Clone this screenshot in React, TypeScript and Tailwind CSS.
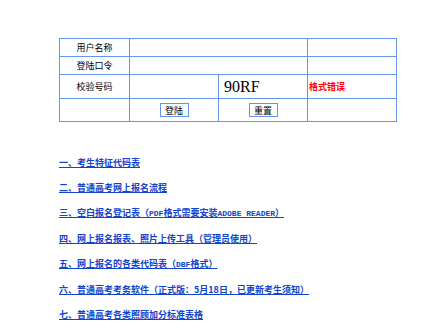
import React from 'react'

const cjk = { fontFamily: '"Noto Sans CJK SC", "Noto Sans", sans-serif' }

const Latin = ({ children }: { children: React.ReactNode }) => (
  <span className="font-['Liberation_Mono',monospace] text-[8px]">{children}</span>
)

const links: React.ReactNode[] = [
  '一、考生特征代码表',
  '二、普通高考网上报名流程',
  <>
    三、空白报名登记表（<Latin>PDF</Latin>格式需要安装<Latin>ADOBE READER</Latin>）
  </>,
  '四、网上报名报表、照片上传工具（管理员使用）',
  <>
    五、网上报名的各类代码表（<Latin>DBF</Latin>格式）
  </>,
  '六、普通高考考务软件（正式版：5月18日，已更新考生须知）',
  '七、普通高考各类照顾加分标准表格',
]

const cell = 'border border-[#6495ed] p-0'
const btn = 'w-[29px] h-[14px] border border-[#6495ed] bg-white text-[9px] leading-none align-middle'

const App = () => {
  return (
    <div className="min-h-screen bg-white pt-[38px] pl-[59px]" style={cjk}>
      <table className="table-fixed border-collapse w-[337px] text-[9px] text-black">
        <colgroup>
          <col className="w-[70px]" />
          <col className="w-[89px]" />
          <col className="w-[89px]" />
          <col className="w-[89px]" />
        </colgroup>
        <tbody>
          <tr className="h-[18px]">
            <td className={`${cell} text-center`}>用户名称</td>
            <td className={cell} colSpan={2}></td>
            <td className={cell}></td>
          </tr>
          <tr className="h-[18px]">
            <td className={`${cell} text-center`}>登陆口令</td>
            <td className={cell} colSpan={2}></td>
            <td className={cell}></td>
          </tr>
          <tr className="h-[24px]">
            <td className={`${cell} text-center`}>校验号码</td>
            <td className={cell}></td>
            <td className={`${cell} pl-[5px] text-[16px] leading-none font-['Liberation_Serif',serif]`}>90RF</td>
            <td className={`${cell} pl-[1px] font-bold text-[#ff0000]`}>格式错误</td>
          </tr>
          <tr className="h-[23px]">
            <td className={cell}></td>
            <td className={`${cell} text-center`}>
              <button className={btn}>登陆</button>
            </td>
            <td className={`${cell} text-center`}>
              <button className={btn}>重置</button>
            </td>
            <td className={cell}></td>
          </tr>
        </tbody>
      </table>

      <div className="mt-[35px] flex flex-col gap-[13px]">
        {links.map((t, i) => (
          <a key={i} href="#" className="self-start text-[9px] leading-[12px] font-bold text-[#1144cc] underline">
            {t}
          </a>
        ))}
      </div>
    </div>
  )
}

export default App
